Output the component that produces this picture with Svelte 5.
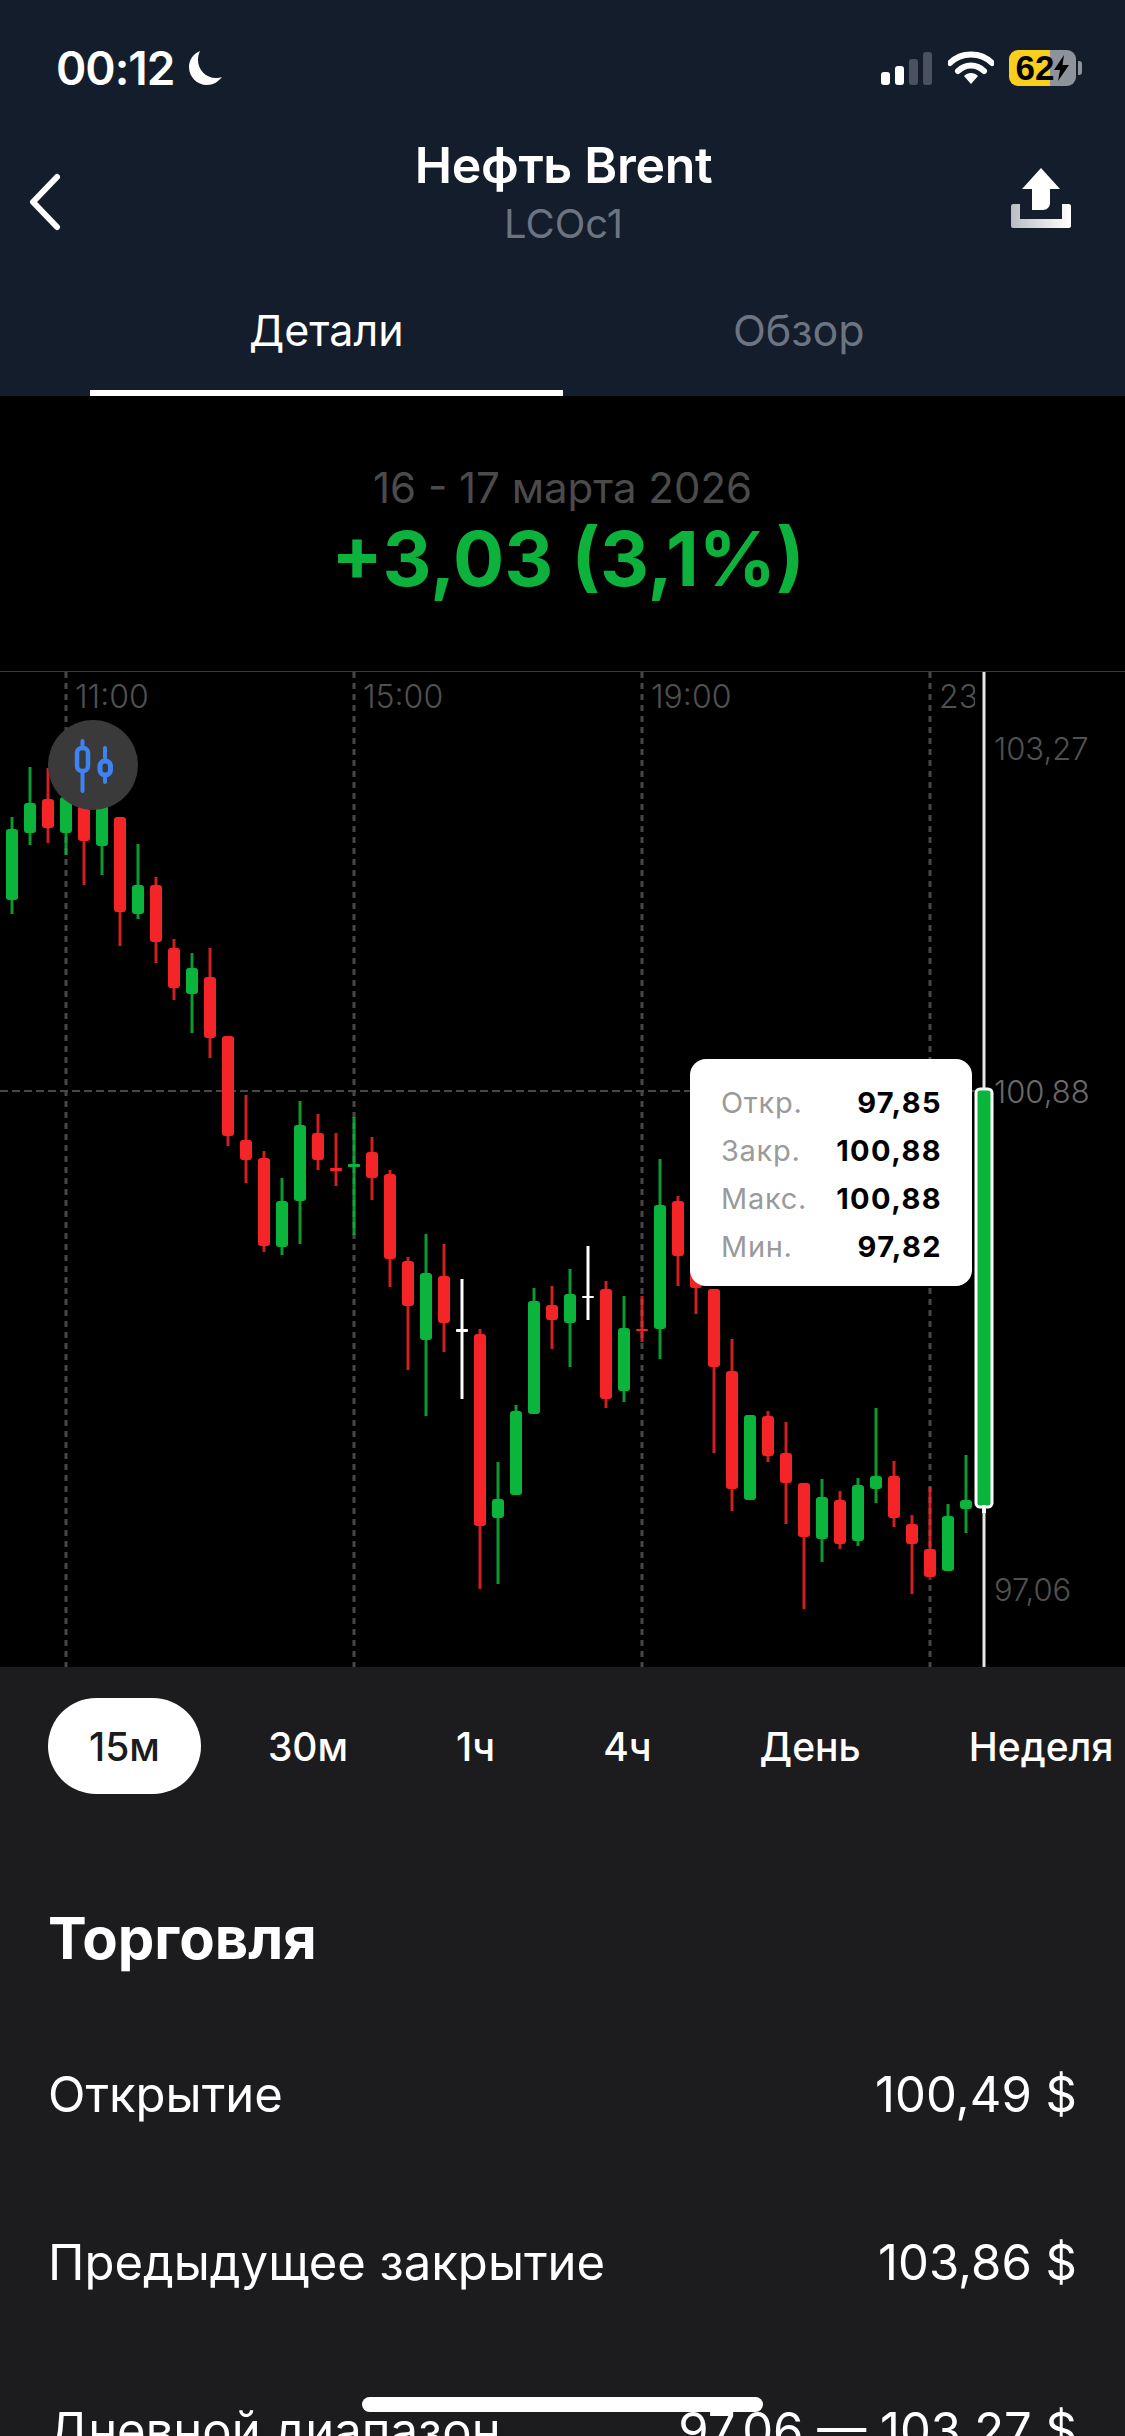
<script lang="ts">
  const UP = '#0bb53b';
  const DOWN = '#f52527';
  const WHITE = '#ffffff';

  // wick top, wick bottom, body top, body bottom, colour. One candle every 18px.
  const candles: [number, number, number, number, string][] = [
    [817, 914, 829, 900, UP], [767, 845, 803, 833, UP], [768, 843, 799, 828, DOWN],
    [770, 855, 797, 833, UP], [775, 885, 800, 841, DOWN], [780, 875, 800, 846, UP],
    [817, 946, 817, 912, DOWN], [844, 919, 885, 914, UP], [877, 963, 885, 942, DOWN],
    [939, 1000, 948, 988, DOWN], [953, 1033, 968, 994, UP], [948, 1058, 977, 1038, DOWN],
    [1036, 1146, 1036, 1136, DOWN], [1095, 1183, 1140, 1160, DOWN], [1151, 1252, 1158, 1246, DOWN],
    [1178, 1255, 1201, 1247, UP], [1101, 1244, 1125, 1201, UP], [1114, 1170, 1133, 1160, DOWN],
    [1133, 1186, 1168, 1171, DOWN], [1117, 1235, 1164, 1167, UP], [1137, 1200, 1152, 1178, DOWN],
    [1170, 1287, 1174, 1259, DOWN], [1257, 1370, 1261, 1306, DOWN], [1234, 1416, 1273, 1340, UP],
    [1244, 1352, 1276, 1323, DOWN], [1279, 1399, 1329, 1332, WHITE], [1329, 1589, 1334, 1526, DOWN],
    [1462, 1584, 1499, 1518, UP], [1405, 1495, 1411, 1495, UP], [1288, 1414, 1301, 1414, UP],
    [1286, 1349, 1305, 1320, DOWN], [1269, 1367, 1294, 1323, UP], [1246, 1320, 1296, 1298, WHITE],
    [1281, 1408, 1289, 1399, DOWN], [1296, 1402, 1328, 1391, UP], [1296, 1342, 1329, 1331, DOWN],
    [1159, 1359, 1205, 1329, UP], [1196, 1286, 1201, 1256, DOWN], [1240, 1314, 1250, 1288, DOWN],
    [1289, 1453, 1289, 1367, DOWN], [1339, 1511, 1371, 1489, DOWN], [1415, 1500, 1415, 1500, UP],
    [1411, 1462, 1416, 1456, DOWN], [1422, 1524, 1453, 1483, DOWN], [1483, 1609, 1483, 1537, DOWN],
    [1479, 1562, 1497, 1539, UP], [1491, 1549, 1500, 1544, DOWN], [1478, 1546, 1485, 1541, UP],
    [1408, 1503, 1476, 1489, UP], [1461, 1527, 1476, 1518, DOWN], [1515, 1594, 1524, 1544, DOWN],
    [1487, 1577, 1549, 1577, DOWN], [1504, 1571, 1516, 1571, UP], [1455, 1533, 1500, 1509, UP]
  ];

  const CHART_TOP = 672;
  const gridX = [66, 354, 642, 930];
  const times = [
    { label: '11:00', x: 75 },
    { label: '15:00', x: 363 },
    { label: '19:00', x: 651 },
    { label: '23:00', x: 939 }
  ];
  const prices = [
    { label: '103,27', y: 77, on: false },
    { label: '100,88', y: 420, on: true },
    { label: '97,06', y: 918, on: false }
  ];
  const ohlc = [
    ['Откр.', '97,85'],
    ['Закр.', '100,88'],
    ['Макс.', '100,88'],
    ['Мин.', '97,82']
  ];
  const ranges = ['15м', '30м', '1ч', '4ч', 'День', 'Неделя'];
  const stats = [
    ['Открытие', '100,49 $'],
    ['Предыдущее закрытие', '103,86 $'],
    ['Дневной диапазон', '97,06 — 103,27 $']
  ];
</script>

<div class="screen">
  <header class="top">
    <div class="status">
      <div class="clock">
        <span>00:12</span>
        <svg width="36" height="36" viewBox="0 0 36 36"><path d="M13 1C6 4 2 10 2 17c0 10 8 18 18 18 6 0 11-3 15-8-2 .8-4 1-6 1C19 28 11 20 11 10c0-3 .6-6 2-9z" fill="#fff"/></svg>
      </div>
      <div class="indicators">
        <svg width="52" height="33" viewBox="0 0 52 33">
          <rect x="0" y="20" width="9" height="13" rx="3" fill="#fff"/>
          <rect x="14" y="14" width="9" height="19" rx="3" fill="#fff"/>
          <rect x="28" y="7" width="9" height="26" rx="3" fill="#4a5260"/>
          <rect x="42" y="0" width="9" height="33" rx="3" fill="#4a5260"/>
        </svg>
        <svg width="46" height="34" viewBox="0 0 46 34">
          <path d="M2 12C13 .5 33 .5 44 12" fill="none" stroke="#fff" stroke-width="6" stroke-linecap="round"/>
          <path d="M10 20c7-7.500 19-7.500 26 0" fill="none" stroke="#fff" stroke-width="6" stroke-linecap="round"/>
          <path d="M16 25c4-4 10-4 14 0l-7 8z" fill="#fff"/>
        </svg>
        <div class="battery">
          <div class="cell">
            <span class="level">62</span>
            <svg width="15" height="26" viewBox="0 0 15 26"><path d="M10 0 0 15h6l-2 11L15 10H8.500z" fill="#000"/></svg>
          </div>
          <div class="nub"></div>
        </div>
      </div>
    </div>

    <div class="nav">
      <svg class="back" width="34" height="58" viewBox="0 0 34 58"><path d="M29 4 5 29l24 25" fill="none" stroke="#fff" stroke-width="6" stroke-linecap="round" stroke-linejoin="round"/></svg>
      <div class="heading">
        <div class="name">Нефть Brent</div>
        <div class="ticker">LCOc1</div>
      </div>
      <svg class="share" width="60" height="60" viewBox="0 0 60 60">
        <defs>
          <linearGradient id="tray" x1="0" x2="1" y1="0" y2="0">
            <stop offset="0" stop-color="#b9bdc3"/>
            <stop offset="1" stop-color="#ffffff"/>
          </linearGradient>
        </defs>
        <path d="M30 0 49 21H39v14c0 4-3 7-7 7H21V21H11z" fill="#fff"/>
        <path d="M2 36h7v15h42V36h7c1 0 2 1 2 2v20c0 1-1 2-2 2H2c-1 0-2-1-2-2V38c0-1 1-2 2-2z" fill="url(#tray)"/>
      </svg>
    </div>

    <div class="tabs">
      <div class="tab active">Детали</div>
      <div class="tab">Обзор</div>
    </div>
  </header>

  <section class="summary">
    <div class="period">16 - 17 марта 2026</div>
    <div class="change">+3,03 (3,1%)</div>
  </section>

  <section class="chart">
    <svg class="plot" width="1125" height="995" viewBox="0 {CHART_TOP} 1125 995">
      {#each gridX as x}
        <line x1={x} x2={x} y1={CHART_TOP} y2={CHART_TOP + 995} class="grid v"/>
      {/each}
      <line x1="0" x2="975" y1="1091" y2="1091" class="grid h"/>
      {#each candles as c, i}
        {@const x = 12 + i * 18}
        <line x1={x} x2={x} y1={c[0]} y2={c[1]} stroke={c[4]} stroke-width="3" opacity={c[4] === WHITE ? 1 : 0.85}/>
        <rect x={x - 6} y={c[2]} width="12" height={c[3] - c[2]} rx={c[3] - c[2] < 5 ? 1 : 3} fill={c[4]}/>
      {/each}
      <line x1="984" x2="984" y1={CHART_TOP} y2={CHART_TOP + 995} stroke="#e6e6e6" stroke-width="3"/>
      <rect x="976" y="1089" width="16" height="418" rx="4" fill={UP} stroke="#fff" stroke-width="3"/>
      <line x1="984" x2="984" y1="1505" y2="1513" stroke="#fff" stroke-width="4"/>
    </svg>

    {#each times as t}
      <span class="time" class:cut={t.label === '23:00'} style="left: {t.x}px">{t.label}</span>
    {/each}
    {#each prices as p}
      <span class="price" class:on={p.on} style="top: {p.y - 20}px">{p.label}</span>
    {/each}

    <button class="mode" aria-label="Тип графика">
      <svg width="46" height="58" viewBox="0 0 46 58" fill="none" stroke="#3f82f2" stroke-linecap="round">
        <path d="M12.500 5v5M12.500 37v18" stroke-width="4"/>
        <rect x="7" y="12" width="11" height="23" rx="5" stroke-width="4.500"/>
        <path d="M35 12v10M35 42v4" stroke-width="4"/>
        <rect x="30" y="25" width="10.500" height="14" rx="5" stroke-width="5"/>
      </svg>
    </button>

    <div class="tooltip">
      {#each ohlc as row}
        <span class="key">{row[0]}</span>
        <span class="val">{row[1]}</span>
      {/each}
    </div>
  </section>

  <section class="panel">
    <div class="ranges">
      {#each ranges as r, i}
        <div class="range" class:active={i === 0}>{r}</div>
      {/each}
    </div>

    <h2>Торговля</h2>

    <div class="stats">
      {#each stats as s}
        <div class="stat">
          <span>{s[0]}</span>
          <span>{s[1]}</span>
        </div>
      {/each}
    </div>
  </section>

  <div class="home"></div>
</div>

<style>
  :global(body) {
    margin: 0;
    background: #000;
  }

  .screen {
    position: relative;
    width: 1125px;
    height: 2436px;
    overflow: hidden;
    display: flex;
    flex-direction: column;
    font-family: Inter, "Noto Sans", sans-serif;
    color: #fff;
    background: #000;
  }

  /* header */
  .top {
    height: 396px;
    flex: none;
    background: #141d2b;
    display: flex;
    flex-direction: column;
  }

  .status {
    height: 136px;
    flex: none;
    display: flex;
    justify-content: space-between;
    align-items: center;
    padding: 0 43px 0 56px;
  }

  .clock {
    display: flex;
    align-items: center;
    gap: 13px;
    font-size: 46px;
    font-weight: 600;
    letter-spacing: -1px;
  }

  .indicators {
    display: flex;
    align-items: center;
    gap: 15px;
    font-family: "Liberation Sans", sans-serif;
  }

  .battery {
    display: flex;
    align-items: center;
    gap: 2px;
  }

  .cell {
    width: 67px;
    height: 36px;
    border-radius: 9px;
    background: linear-gradient(90deg, #f9cf1e 0 61%, #8e929a 61% 100%);
    display: flex;
    align-items: center;
    justify-content: center;
    color: #000;
    font-size: 35px;
    font-weight: 700;
  }

  .nub {
    width: 4px;
    height: 14px;
    border-radius: 0 3px 3px 0;
    background: #8e929a;
  }

  .nav {
    flex: none;
    height: 122px;
    display: grid;
    grid-template-columns: 1fr auto 1fr;
    align-items: center;
    padding: 0 54px;
  }

  .back {
    margin: 4px 0 0 -26px;
  }

  .share {
    justify-self: end;
    margin-top: -4px;
  }

  .heading {
    text-align: center;
    margin: 0 0 10px 2px;
  }

  .name {
    font-size: 50px;
    line-height: 58px;
    font-weight: 600;
    letter-spacing: -0.3px;
  }

  .ticker {
    font-size: 40px;
    line-height: 60px;
    color: #6c7482;
  }

  .tabs {
    margin-top: auto;
    display: grid;
    grid-template-columns: 1fr 1fr;
    padding: 0 90px;
  }

  .tab {
    height: 98px;
    box-sizing: border-box;
    padding-bottom: 28px;
    display: flex;
    align-items: center;
    justify-content: center;
    font-size: 43px;
    color: #6c7482;
    border-bottom: 6px solid transparent;
  }

  .tab.active {
    color: #fff;
    border-bottom-color: #fff;
  }

  /* price change */
  .summary {
    height: 275px;
    flex: none;
    display: flex;
    flex-direction: column;
    align-items: center;
    padding-top: 68px;
    box-sizing: border-box;
  }

  .period {
    font-size: 42px;
    line-height: 48px;
    color: #4b4b4b;
  }

  .change {
    margin-left: 11px;
    font-size: 76px;
    line-height: 92px;
    font-weight: 700;
    color: #0db23c;
  }

  /* chart */
  .chart {
    position: relative;
    flex: none;
    height: 995px;
    background: #000;
    border-top: 1px solid #3a3a3a;
  }

  .plot {
    display: block;
  }

  .grid {
    stroke: #474747;
    stroke-width: 3;
    stroke-dasharray: 6 5;
  }

  .grid.h {
    stroke-width: 2;
    stroke-dasharray: 8 4;
  }

  .time,
  .price {
    position: absolute;
    font-size: 31px;
    line-height: 40px;
    color: #505050;
  }

  .time {
    top: 5px;
    font-size: 32px;
    font-weight: 300;
  }

  .time.cut {
    width: 36px;
    overflow: hidden;
    white-space: nowrap;
  }

  .price {
    left: 994px;
    font-weight: 300;
  }

  .price.on {
    color: #6a6a6a;
  }

  .mode {
    position: absolute;
    left: 48px;
    top: 48px;
    width: 90px;
    height: 90px;
    padding: 0;
    border: none;
    border-radius: 50%;
    background: #3a3a3a;
    display: flex;
    align-items: center;
    justify-content: center;
  }

  .tooltip {
    position: absolute;
    left: 690px;
    top: 387px;
    width: 282px;
    height: 227px;
    box-sizing: border-box;
    padding: 19px 30px 0 31px;
    border-radius: 16px;
    background: #fff;
    display: grid;
    grid-template-columns: auto auto;
    grid-auto-rows: 48px;
    justify-content: space-between;
    align-items: center;
    font-size: 29px;
    letter-spacing: 0.7px;
  }

  .key {
    color: #9a9a9a;
  }

  .val {
    color: #000;
    font-weight: 700;
    text-align: right;
    letter-spacing: 1.4px;
  }

  /* lower panel */
  .panel {
    flex: 1;
    background: #1c1c1e;
    padding: 31px 48px 0 48px;
  }

  .ranges {
    display: flex;
    gap: 26px;
    white-space: nowrap;
  }

  .range {
    height: 96px;
    padding: 0 41px;
    flex: none;
    display: flex;
    align-items: center;
    border-radius: 48px;
    font-size: 39px;
    font-weight: 500;
  }

  .range.active {
    background: #fff;
    color: #1c1c1e;
  }

  h2 {
    margin: 104px 0 0;
    font-size: 58px;
    line-height: 80px;
    font-weight: 700;
  }

  .stats {
    margin: 86px 0 0;
    display: flex;
    flex-direction: column;
    gap: 108px;
  }

  .stat {
    height: 60px;
    display: flex;
    justify-content: space-between;
    align-items: center;
    font-size: 49px;
  }

  .home {
    position: absolute;
    left: 362px;
    top: 2397px;
    width: 401px;
    height: 15px;
    border-radius: 8px;
    background: #fff;
  }
</style>
